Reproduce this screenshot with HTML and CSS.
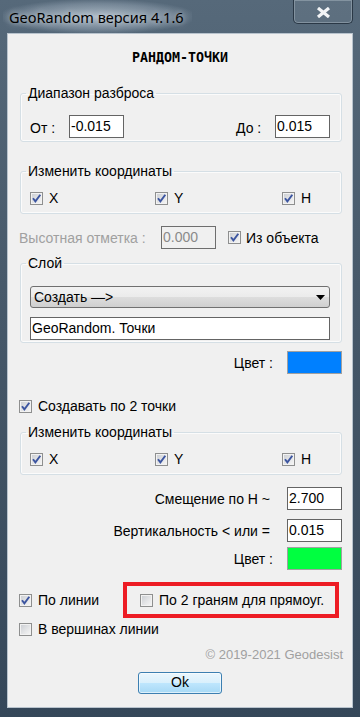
FILE: index.html
```html
<!DOCTYPE html>
<html lang="ru">
<head>
    <meta charset="UTF-8">
    <meta name="viewport" content="width=device-width, initial-scale=1.0">
    <title>GeoRandom</title>
    <link rel="stylesheet" href="styles.css">
</head>
<body>
    <div class="window">
        <!-- Title bar -->
        <div class="titlebar">
            <span class="title">GeoRandom версия 4.1.6</span>
            <span class="close-btn">
                <svg width="15" height="11" viewBox="0 0 15 11"><path d="M2 1 L13 10 M13 1 L2 10" stroke="#f2f4f6" stroke-width="3.2" fill="none"/></svg>
            </span>
        </div>

        <div class="client">
            <h1 class="heading">РАНДОМ-ТОЧКИ</h1>

            <!-- Range -->
            <fieldset class="group group-range">
                <legend>Диапазон разброса</legend>
                <div class="range-row">
                    <div class="range-pair">
                        <span class="range-label">От :</span>
                        <div class="field">-0.015</div>
                    </div>
                    <div class="range-pair">
                        <span class="range-label">До :</span>
                        <div class="field">0.015</div>
                    </div>
                </div>
            </fieldset>

            <!-- Coordinates 1 -->
            <fieldset class="group group-coords">
                <legend>Изменить координаты</legend>
                <div class="cb-row">
                    <div class="cb-item cb-x"><span class="cb"><svg width="11" height="11" viewBox="0 0 11 11"><path d="M2 5.2 L4.4 8.4 L9.3 1.8" stroke="#3c55a0" stroke-width="1.9" fill="none"/></svg></span>X</div>
                    <div class="cb-item cb-y"><span class="cb"><svg width="11" height="11" viewBox="0 0 11 11"><path d="M2 5.2 L4.4 8.4 L9.3 1.8" stroke="#3c55a0" stroke-width="1.9" fill="none"/></svg></span>Y</div>
                    <div class="cb-item"><span class="cb"><svg width="11" height="11" viewBox="0 0 11 11"><path d="M2 5.2 L4.4 8.4 L9.3 1.8" stroke="#3c55a0" stroke-width="1.9" fill="none"/></svg></span>H</div>
                </div>
            </fieldset>

            <!-- Altitude -->
            <div class="alt-row">
                <span class="alt-label">Высотная отметка :</span>
                <div class="field disabled">0.000</div>
                <div class="cb-item alt-check"><span class="cb"><svg width="11" height="11" viewBox="0 0 11 11"><path d="M2 5.2 L4.4 8.4 L9.3 1.8" stroke="#3c55a0" stroke-width="1.9" fill="none"/></svg></span>Из объекта</div>
            </div>

            <!-- Layer -->
            <fieldset class="group group-layer">
                <legend>Слой</legend>
                <div class="select">
                    <span>Создать —&gt;</span>
                    <svg width="9" height="5" viewBox="0 0 9 5"><polygon points="0,0 9,0 4.5,5" fill="#000"/></svg>
                </div>
                <div class="field wide">GeoRandom. Точки</div>
            </fieldset>

            <div class="value-row color-row first-color">
                <span class="value-label">Цвет :</span>
                <div class="swatch blue"></div>
            </div>

            <div class="cb-item single two-points"><span class="cb"><svg width="11" height="11" viewBox="0 0 11 11"><path d="M2 5.2 L4.4 8.4 L9.3 1.8" stroke="#3c55a0" stroke-width="1.9" fill="none"/></svg></span>Создавать по 2 точки</div>

            <!-- Coordinates 2 -->
            <fieldset class="group group-coords second">
                <legend>Изменить координаты</legend>
                <div class="cb-row">
                    <div class="cb-item cb-x"><span class="cb"><svg width="11" height="11" viewBox="0 0 11 11"><path d="M2 5.2 L4.4 8.4 L9.3 1.8" stroke="#3c55a0" stroke-width="1.9" fill="none"/></svg></span>X</div>
                    <div class="cb-item cb-y"><span class="cb"><svg width="11" height="11" viewBox="0 0 11 11"><path d="M2 5.2 L4.4 8.4 L9.3 1.8" stroke="#3c55a0" stroke-width="1.9" fill="none"/></svg></span>Y</div>
                    <div class="cb-item"><span class="cb"><svg width="11" height="11" viewBox="0 0 11 11"><path d="M2 5.2 L4.4 8.4 L9.3 1.8" stroke="#3c55a0" stroke-width="1.9" fill="none"/></svg></span>H</div>
                </div>
            </fieldset>

            <div class="value-row shift-row">
                <span class="value-label">Смещение по Н ~</span>
                <div class="field">2.700</div>
            </div>
            <div class="value-row vert-row">
                <span class="value-label">Вертикальность &lt; или =</span>
                <div class="field">0.015</div>
            </div>
            <div class="value-row color-row second-color">
                <span class="value-label">Цвет :</span>
                <div class="swatch green"></div>
            </div>

            <!-- Line options -->
            <div class="line-row">
                <div class="cb-item line-check"><span class="cb"><svg width="11" height="11" viewBox="0 0 11 11"><path d="M2 5.2 L4.4 8.4 L9.3 1.8" stroke="#3c55a0" stroke-width="1.9" fill="none"/></svg></span>По линии</div>
                <div class="highlight">
                    <div class="cb-item"><span class="cb"></span>По 2 граням для прямоуг.</div>
                </div>
            </div>
            <div class="cb-item single vertices"><span class="cb"></span>В вершинах линии</div>

            <div class="copyright">© 2019-2021 Geodesist</div>

            <div class="ok-btn">Ok</div>
        </div>
    </div>
</body>
</html>
```

FILE: styles.css
```css
/* General */
body {
    margin: 0;
    padding: 0;
    background: #3a4c5d;
}

.window {
    width: 360px;
    height: 717px;
    box-sizing: border-box;
    padding: 0 7px;
    background: linear-gradient(180deg, #56697a 0%, #47596a 40%, #354759 100%);
    font-family: "Liberation Sans", Arial, sans-serif;
    font-size: 14px;
    color: #000;
    overflow: hidden;
}

/* Title bar */
.titlebar {
    height: 33px;
    display: flex;
    align-items: flex-start;
}

.title {
    margin-left: -4px;
    padding: 7px 8px 6px 6px;
    font-family: "Noto Sans", sans-serif;
    font-size: 14.5px;
    line-height: 20px;
    color: #000;
    background: radial-gradient(ellipse at center, rgba(200, 212, 222, 0.75) 0%, rgba(160, 175, 190, 0.4) 55%, rgba(90, 110, 125, 0) 75%);
    text-shadow: 0 0 6px rgba(230, 236, 242, 0.9);
}

.close-btn {
    margin-left: auto;
    width: 60px;
    height: 24px;
    box-sizing: border-box;
    border: 1px solid #2a3846;
    border-top: none;
    border-radius: 0 0 5px 5px;
    box-shadow: inset 0 0 0 1px rgba(200, 212, 222, 0.35);
    background: rgba(255, 255, 255, 0.05);
    display: flex;
    align-items: center;
    justify-content: center;
    padding-top: 1px;
}

/* Client area */
.client {
    height: 675px;
    box-sizing: border-box;
    border: 1px solid #b8c3cd;
    background: #f0f0f0;
    display: flex;
    flex-direction: column;
}

.heading {
    margin: 16px 0 0;
    font-family: "DejaVu Sans Mono", monospace;
    font-weight: bold;
    font-size: 13.3px;
    line-height: 16px;
    text-align: center;
    letter-spacing: 0;
}

/* Group boxes */
.group {
    margin: 0 10px 0 12px;
    padding: 0 11px 3px 9px;
    border: 1px solid #d5dfe5;
    border-radius: 3px;
    box-shadow: inset 0 0 0 1px #fbfbfb;
    min-width: 0;
}

.group legend {
    margin-left: -4px;
    padding: 0 2px;
    line-height: 16px;
}

.group-range {
    margin-top: 19px;
    padding-top: 14px;
}

.group-coords {
    margin-top: 21px;
    padding-top: 11px;
    padding-bottom: 7px;
}

.group-coords.second {
    margin-top: 10px;
}

.group-layer {
    margin-top: 6px;
    padding-top: 15px;
    padding-bottom: 2px;
}

/* Fields */
.field {
    width: 55px;
    height: 23px;
    box-sizing: border-box;
    border: 1px solid #646464;
    background: #fff;
    padding: 1px 0 0 1px;
    line-height: 18px;
    white-space: nowrap;
    flex: none;
}

.field.wide {
    width: 300px;
    margin-top: 9px;
}

.field.disabled {
    background: #f0f0f0;
    border-color: #6e6e6e;
    color: #8a8a8a;
}

.range-row {
    display: flex;
    justify-content: space-between;
}

.range-pair {
    display: flex;
    align-items: center;
}

.range-label {
    width: 39px;
    flex: none;
    line-height: 16px;
    padding-top: 2px;
}

/* Checkboxes */
.cb-row {
    display: flex;
}

.cb-item {
    display: flex;
    align-items: center;
    line-height: 16px;
    white-space: nowrap;
}

.cb-x {
    width: 125px;
}

.cb-y {
    width: 127px;
}

.cb {
    width: 13px;
    height: 13px;
    box-sizing: border-box;
    border: 1px solid #8e8f8f;
    background: linear-gradient(135deg, #c9ccd1 0%, #e4e5e7 55%, #f7f7f7 100%);
    box-shadow: inset 0 0 0 1px #f2f2f2;
    margin-right: 6px;
    flex: none;
    display: flex;
    align-items: center;
    justify-content: center;
}

.cb svg {
    display: block;
}

.single {
    margin-left: 11px;
}

.two-points {
    margin-top: 24px;
}

.vertices {
    margin-top: 3px;
}

/* Altitude row */
.alt-row {
    margin: 12px 0 0 11px;
    display: flex;
    align-items: center;
}

.alt-label {
    width: 142px;
    flex: none;
    color: #a0a0a0;
    line-height: 16px;
}

.alt-check {
    margin-left: 12px;
}

.alt-check .cb {
    margin-right: 5px;
}

/* Select */
.select {
    width: 300px;
    height: 22px;
    box-sizing: border-box;
    border: 1px solid #707070;
    border-radius: 3px;
    background: linear-gradient(180deg, #f2f2f2 0%, #ebebeb 50%, #dddddd 51%, #cfcfcf 100%);
    display: flex;
    align-items: center;
    justify-content: space-between;
    padding: 0 4px 0 3px;
    line-height: 16px;
}

/* Value rows */
.value-row {
    margin-right: 10px;
    display: flex;
    justify-content: flex-end;
    align-items: center;
}

.value-label {
    line-height: 16px;
    margin-right: 17px;
}

.color-row .value-label {
    margin-right: 14px;
}

.first-color {
    margin-top: 8px;
}

.shift-row {
    margin-top: 12px;
}

.vert-row {
    margin-top: 9px;
}

.second-color {
    margin-top: 5px;
}

.swatch {
    width: 55px;
    height: 23px;
    box-sizing: border-box;
    border: 1px solid #a0a0a0;
}

.swatch.blue {
    background: #0080ff;
}

.swatch.green {
    background: #00ff40;
}

/* Line options */
.line-row {
    margin-top: 12px;
    display: flex;
    align-items: center;
}

.line-check {
    width: 104px;
    margin-left: 11px;
}

.highlight {
    width: 216px;
    height: 36px;
    box-sizing: border-box;
    border: 4px solid #ed1c24;
    padding-left: 13px;
    display: flex;
    align-items: center;
}

.copyright {
    margin: 10px 9px 0 0;
    text-align: right;
    font-size: 13px;
    line-height: 16px;
    color: #a0a0a0;
}

.ok-btn {
    margin: 9px auto 0;
    width: 84px;
    height: 22px;
    box-sizing: border-box;
    border: 1px solid #3c7fb1;
    border-radius: 3px;
    background: linear-gradient(180deg, #eaf6fd 0%, #d9f0fc 50%, #bee6fd 51%, #a7d9f5 100%);
    box-shadow: inset 0 0 0 1px rgba(255, 255, 255, 0.6);
    text-align: center;
    line-height: 19px;
}
```
